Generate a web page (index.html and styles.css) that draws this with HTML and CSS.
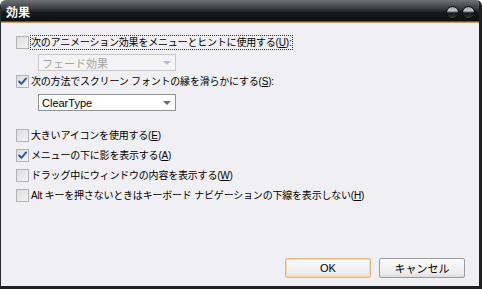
FILE: index.html
```html
<!DOCTYPE html>
<html lang="ja">
<head>
    <meta charset="UTF-8">
    <title>効果</title>
    <link rel="stylesheet" href="styles.css">
</head>
<body>
    <div class="window">
        <div class="titlebar">
            <span class="title">効果</span>
            <div class="title-buttons">
                <span class="orb"></span>
                <span class="orb"></span>
            </div>
        </div>
        <div class="content">
            <div class="row">
                <span class="check"></span>
                <span class="label focus">次のアニメーション効果をメニューとヒントに使用する(<u>U</u>):</span>
            </div>
            <div class="combo disabled">
                <span class="combo-text">フェード効果</span>
                <span class="combo-arrow"></span>
            </div>
            <div class="row row-second">
                <span class="check"><svg viewBox="0 0 13 13"><path d="M2.5 6.5 L5.2 9.3 L10.8 2.8"/></svg></span>
                <span class="label">次の方法でスクリーン フォントの縁を滑らかにする(<u>S</u>):</span>
            </div>
            <div class="combo">
                <span class="combo-text">ClearType</span>
                <span class="combo-arrow"></span>
            </div>
            <div class="options">
                <div class="row">
                    <span class="check"></span>
                    <span class="label">大きいアイコンを使用する(<u>E</u>)</span>
                </div>
                <div class="row">
                    <span class="check"><svg viewBox="0 0 13 13"><path d="M2.5 6.5 L5.2 9.3 L10.8 2.8"/></svg></span>
                    <span class="label">メニューの下に影を表示する(<u>A</u>)</span>
                </div>
                <div class="row">
                    <span class="check"></span>
                    <span class="label">ドラッグ中にウィンドウの内容を表示する(<u>W</u>)</span>
                </div>
                <div class="row">
                    <span class="check"></span>
                    <span class="label">Alt キーを押さないときはキーボード ナビゲーションの下線を表示しない(<u>H</u>)</span>
                </div>
            </div>
        </div>
        <div class="footer">
            <button class="btn default">OK</button>
            <button class="btn">キャンセル</button>
        </div>
    </div>
</body>
</html>
```

FILE: styles.css
```css
* {
    margin: 0;
    padding: 0;
    box-sizing: border-box;
}

body {
    font-family: "Liberation Sans", "Noto Sans CJK JP", sans-serif;
    font-size: 10px;
    color: #000;
    background: #fff;
}

.window {
    width: 482px;
    height: 289px;
    display: flex;
    flex-direction: column;
    background: #f0eff3;
    border-left: 1px solid #2a2c30;
    border-right: 3px solid #1e2024;
    border-bottom: 3px solid #1e2024;
    border-radius: 6px 6px 0 0;
    overflow: hidden;
}

.titlebar {
    height: 22px;
    display: flex;
    align-items: center;
    justify-content: space-between;
    padding: 0 7px 0 6px;
    background: linear-gradient(#6e7276, #3a3e42 40%, #16191c 60%, #0e1113);
    border-bottom: 1px solid #8a4418;
    box-shadow: 0 1px 0 #c9a15c;
    margin-right: -3px;
    margin-left: -1px;
}

.title {
    color: #fff;
    font-weight: bold;
    font-size: 12px;
    padding-top: 1px;
}

.title-buttons {
    display: flex;
    gap: 3px;
    padding-top: 3px;
}

.orb {
    width: 13px;
    height: 13px;
    border-radius: 50%;
    border: 1px solid #050505;
    background: linear-gradient(#9a9da0, #c4c6c8 30%, #6c6f72 48%, #101214 52%, #2a2d30 85%, #505356);
}

.content {
    padding: 13px 0 0 15px;
    display: flex;
    flex-direction: column;
}

.row {
    display: flex;
    align-items: center;
    height: 15px;
}

.row-second {
    margin-top: 3px;
}

.check {
    width: 13px;
    height: 13px;
    border: 1px solid #b3b3b3;
    background: linear-gradient(135deg, #dcdcdc, #f4f4f4);
    flex: none;
    display: flex;
}

.check svg {
    width: 11px;
    height: 11px;
}

.check path {
    fill: none;
    stroke: #2155a6;
    stroke-width: 2.2;
    stroke-linecap: round;
    stroke-linejoin: round;
}

.label {
    margin-left: 1px;
    padding: 0 1px 0 0;
    white-space: nowrap;
    line-height: 13px;
    letter-spacing: -0.2px;
    border: 1px solid transparent;
}

.label.focus {
    border: 1px dotted #333;
}

.label u {
    text-underline-offset: 1px;
}

.combo {
    width: 138px;
    height: 17px;
    margin: 4px 0 0 22px;
    display: flex;
    align-items: center;
    background: #fff;
    border: 1px solid #8f9398;
    font-size: 11px;
}

.row-second + .combo {
    margin-top: 5px;
}

.combo.disabled {
    background: #f4f4f4;
    border-color: #c9c9c9;
    color: #a4a4a4;
}

.combo-text {
    flex: 1;
    padding-left: 3px;
}

.combo-arrow {
    width: 16px;
    height: 15px;
    display: flex;
    align-items: center;
    justify-content: center;
}

.combo-arrow::after {
    content: "";
    border-left: 4px solid transparent;
    border-right: 4px solid transparent;
    border-top: 4px solid #6c6c6c;
}

.combo.disabled .combo-arrow::after {
    border-top-color: #b4c0d0;
}

.options {
    margin-top: 14px;
    display: flex;
    flex-direction: column;
}

.options .row {
    height: 20px;
}

.footer {
    margin-top: auto;
    display: flex;
    justify-content: flex-end;
    gap: 8px;
    padding: 0 14px 8px 0;
}

.btn {
    width: 86px;
    height: 20px;
    font-family: inherit;
    font-size: 11px;
    color: #000;
    border: 1px solid #9a9a9a;
    border-radius: 2px;
    background: linear-gradient(#fbfbfb, #ececec 80%, #dcdcdc);
}

.btn.default {
    border-color: #e6b478;
    box-shadow: inset 0 0 0 1px #f7d9a8;
}
```
